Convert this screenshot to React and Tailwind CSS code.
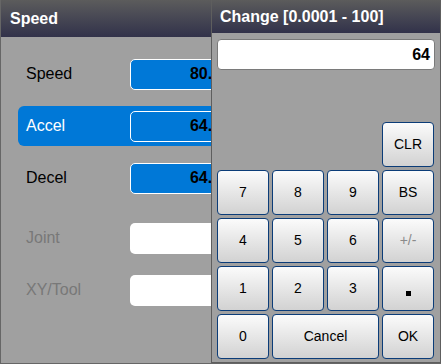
import React from 'react'

const rows = [
    { label: 'Speed', value: '80.00', kind: 'blue' },
    { label: 'Accel', value: '64.00', kind: 'blue', active: true },
    { label: 'Decel', value: '64.00', kind: 'blue' },
    { label: 'Joint', value: '', kind: 'off', gapTop: true },
    { label: 'XY/Tool', value: '', kind: 'off' },
]

const Key = ({ children, className = '', muted }) => (
    <button
        className={`flex h-[45px] items-center justify-center rounded-[4px] border border-[#0b3c78] bg-linear-to-b from-[#fbfbfb] to-[#d2d2d2] text-[14px] ${
            muted ? 'text-[#8a8a8a]' : 'text-black'
        } ${className}`}
    >
        {children}
    </button>
)

const Row = ({ row }) => (
    <div
        className={`ml-[17px] flex h-10 w-[260px] items-center rounded-md pl-2 ${
            row.active ? 'bg-[#0078d7]' : ''
        } ${row.gapTop ? 'mt-5' : 'mt-3'}`}
    >
        <span
            className={`w-[104px] text-[16px] ${
                row.active ? 'text-white' : row.kind === 'off' ? 'text-[#787878]' : 'text-black'
            }`}
        >
            {row.label}
        </span>
        <div
            className={`flex h-[31px] w-[106px] items-center justify-end rounded-[5px] pr-[5px] text-[16px] font-bold text-black ${
                row.kind === 'blue' ? 'border border-white bg-[#0078d7]' : 'bg-white'
            }`}
        >
            {row.value}
        </div>
    </div>
)

export default function App() {
    return (
        <div
            className="relative h-[364px] w-[441px] overflow-hidden bg-[#a0a0a0]"
            style={{ fontFamily: '"Liberation Sans", Arial, sans-serif' }}
        >
            {/* settings panel */}
            <div className="h-full w-full border-b border-l border-[#666]">
                <div className="flex h-[37px] items-center bg-linear-to-b from-[#5c5c5c] to-[#32324a] px-[9px] text-[16px] font-bold text-white">
                    Speed
                </div>
                <div className="pt-[5px]">
                    {rows.map((r) => (
                        <Row row={r} key={r.label} />
                    ))}
                </div>
            </div>

            {/* number pad popup */}
            <div className="absolute left-[211px] top-0 flex h-[363px] w-[230px] flex-col border-b border-l border-r border-[#5e5e5e] bg-[#a0a0a0]">
                <div className="flex h-[33px] items-center bg-linear-to-b from-[#5c5c5c] to-[#32324a] px-2 text-[16px] font-bold text-white">
                    Change [0.0001 - 100]
                </div>
                <div className="mx-[5px] mt-[6px] flex h-[31px] items-center justify-end rounded-[4px] border border-[#7a7a7a] bg-white pr-[4px] text-[16px] font-bold text-black">
                    64
                </div>
                <div className="mx-[5px] mt-[52px] grid grid-cols-[52px_52px_52px_52px] gap-x-[3px] gap-y-[3px]">
                    <div className="col-span-3" />
                    <Key>CLR</Key>
                    <Key>7</Key>
                    <Key>8</Key>
                    <Key>9</Key>
                    <Key>BS</Key>
                    <Key>4</Key>
                    <Key>5</Key>
                    <Key>6</Key>
                    <Key muted>+/-</Key>
                    <Key>1</Key>
                    <Key>2</Key>
                    <Key>3</Key>
                    <Key>
                        <span className="mt-[10px] block h-[5px] w-[5px] bg-black" />
                    </Key>
                    <Key>0</Key>
                    <Key className="col-span-2">Cancel</Key>
                    <Key>OK</Key>
                </div>
            </div>
        </div>
    )
}
